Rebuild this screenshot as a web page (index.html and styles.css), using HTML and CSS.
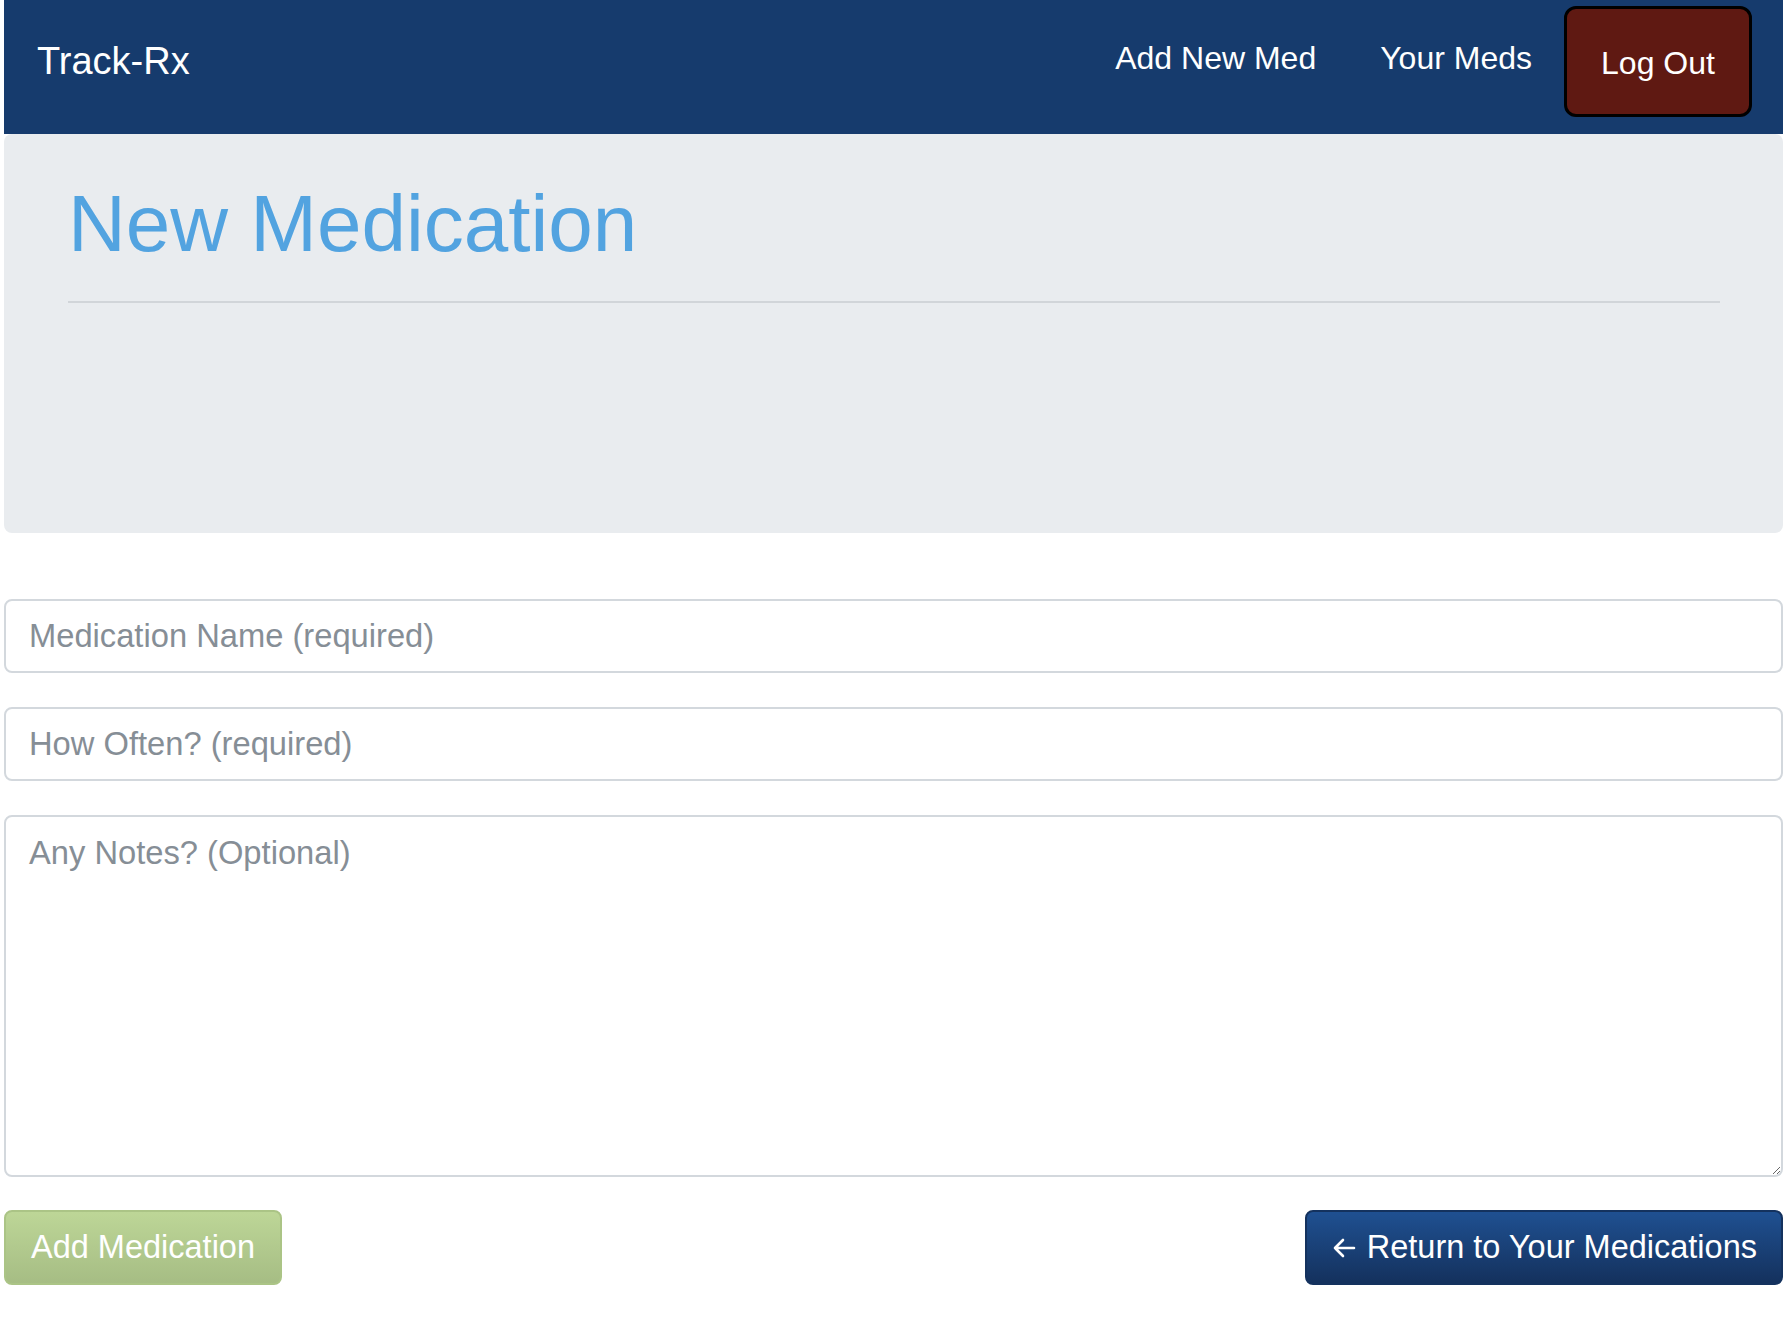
FILE: index.html
```html
<!DOCTYPE html>
<html lang="en">
<head>
<meta charset="utf-8">
<title>Track-Rx - New Medication</title>
<link rel="stylesheet" href="styles.css">
</head>
<body>
<div class="page">
  <nav class="navbar">
    <a class="brand" href="#">Track-Rx</a>
    <a class="nav-link" href="#">Add New Med</a>
    <a class="nav-link" href="#">Your Meds</a>
    <a class="logout" href="#">Log Out</a>
  </nav>
  <header class="jumbotron">
    <h1 class="title">New Medication</h1>
    <hr class="rule">
  </header>
  <form class="med-form">
    <input class="field" type="text" placeholder="Medication Name (required)">
    <input class="field" type="text" placeholder="How Often? (required)">
    <textarea class="field notes" placeholder="Any Notes? (Optional)"></textarea>
    <div class="actions">
      <button class="btn btn-add" type="button">Add Medication</button>
      <button class="btn btn-return" type="button"><svg class="arrow" width="24" height="20" viewBox="0 0 24 20"><path d="M22 10H3M11 2L3 10L11 18" fill="none" stroke="#fff" stroke-width="2.6" stroke-linecap="round" stroke-linejoin="round"/></svg>Return to Your Medications</button>
    </div>
  </form>
</div>
</body>
</html>
```
FILE: styles.css
```css
html, body {
  margin: 0;
  padding: 0;
  background: #fff;
}

body {
  font-family: "Liberation Sans", Arial, sans-serif;
}

.page {
  margin: 0 9px 0 4px;
}

.navbar {
  display: flex;
  align-items: center;
  height: 134px;
  box-sizing: border-box;
  padding: 6px 31px 17px 33px;
  background: #163b6d;
}

.brand {
  font-size: 38px;
  color: #fff;
  text-decoration: none;
  margin-right: auto;
}

.nav-link {
  font-size: 32px;
  color: #fff;
  text-decoration: none;
  padding: 0 32px 6px;
}

.logout {
  display: flex;
  align-items: center;
  justify-content: center;
  box-sizing: border-box;
  width: 188px;
  height: 111px;
  padding-top: 3px;
  font-size: 32px;
  color: #fff;
  text-decoration: none;
  background: #5f1912;
  border: 3px solid #000;
  border-radius: 12px;
}

.jumbotron {
  box-sizing: border-box;
  height: 399px;
  padding: 42px 63px 0 64px;
  background: #e9ecef;
  border-radius: 8px;
}

.title {
  margin: 0;
  font-size: 80px;
  line-height: 96px;
  font-weight: 400;
  color: #52a3e0;
}

.rule {
  margin: 29px 0 0;
  border: 0;
  border-top: 2px solid #d1d5d9;
}

.med-form {
  margin-top: 66px;
}

.field {
  display: block;
  width: 100%;
  box-sizing: border-box;
  height: 74px;
  margin: 0 0 34px;
  padding: 0 23px;
  font-family: "Liberation Sans", Arial, sans-serif;
  font-size: 32.7px;
  color: #495057;
  background: #fff;
  border: 2px solid #d3d8dd;
  border-radius: 8px;
  outline: none;
}

.field::placeholder {
  color: #868e96;
}

.notes {
  height: 362px;
  padding-top: 11px;
  line-height: 1.5;
  resize: vertical;
  margin-bottom: 33px;
}

.actions {
  display: flex;
  justify-content: space-between;
}

.btn {
  display: flex;
  align-items: center;
  height: 75px;
  box-sizing: border-box;
  padding: 0 25px;
  font-family: "Liberation Sans", Arial, sans-serif;
  font-size: 32.5px;
  color: #fff;
  border-radius: 8px;
  border: 2px solid transparent;
  cursor: pointer;
}

.btn-add {
  background: linear-gradient(#bdd697, #a6bd84);
  border-color: #abc486;
}

.btn-return {
  background: linear-gradient(#1f5091, #14315d);
  border-color: #14325e;
  padding-left: 25px;
  padding-right: 24px;
}

.arrow {
  margin-right: 11px;
  flex: none;
}
```
